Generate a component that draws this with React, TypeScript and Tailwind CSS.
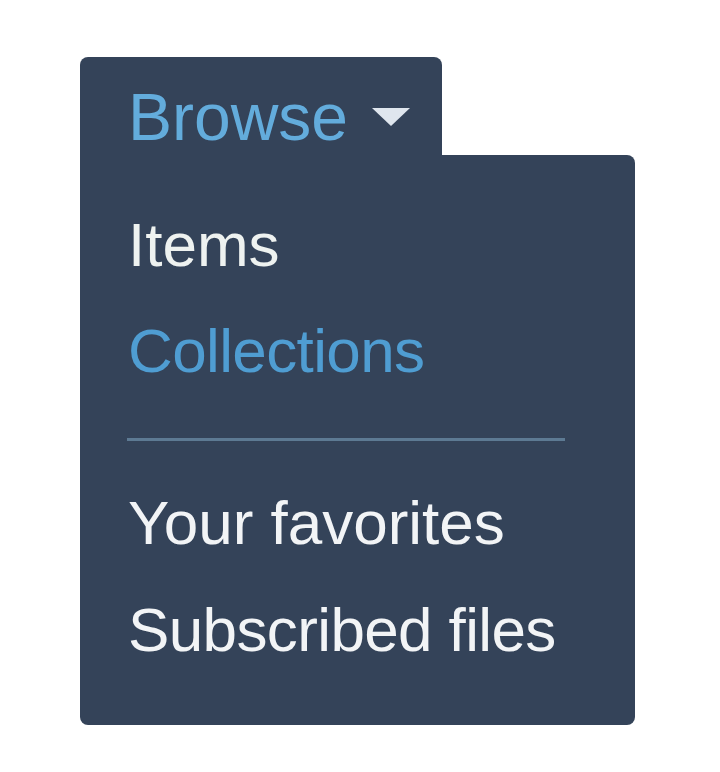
const FONT = "font-['Liberation_Sans',Arial,sans-serif]";

export default function App() {
  return (
    <div className={`min-h-[772px] bg-white pt-[57px] pl-[80px] ${FONT}`}>
      {/* tab */}
      <div className="flex w-[362px] h-[98px] items-start rounded-t-[8px] bg-[#344359] pl-[48px] pt-[30px]">
        <span className="text-[66px] leading-[60px] text-[#63acdc]">Browse</span>
        <svg className="ml-[24px] mt-[21px]" width="38" height="18" viewBox="0 0 38 18">
          <path d="M0 0 H38 L19 18 Z" fill="#dfe6ee" />
        </svg>
      </div>
      {/* menu */}
      <div className="w-[555px] rounded-b-[8px] rounded-tr-[8px] bg-[#344359] pl-[48px] pr-[40px] pt-[37px] pb-[42px]">
        <div className="text-[62px] leading-[106px] text-[#eef2f0]">Items</div>
        <div className="text-[62px] leading-[106px] tracking-[-0.01em] text-[#4f9dd2]">Collections</div>
        <div className="mt-[34px] mb-[29px] -ml-[1px] h-[3px] w-[438px] bg-[#5d7a93]" />
        <div className="text-[62px] leading-[106px] text-[#f2f4f6]">Your favorites</div>
        <div className="text-[62px] leading-[107px] tracking-[-0.01em] text-[#f2f4f6]">Subscribed files</div>
      </div>
    </div>
  );
}
